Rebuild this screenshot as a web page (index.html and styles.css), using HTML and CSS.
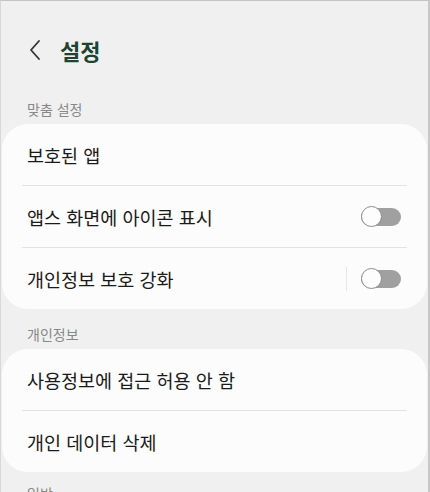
FILE: index.html
```html
<!DOCTYPE html>
<html lang="ko">
<head>
<meta charset="utf-8">
<link rel="stylesheet" href="styles.css">
</head>
<body>
<div class="screen">
  <header class="appbar">
    <svg class="back" width="14" height="22" viewBox="0 0 14 22"><path d="M11 2 L3 11 L11 20" fill="none" stroke="#333" stroke-width="1.8" stroke-linecap="round" stroke-linejoin="round"/></svg>
    <h1 class="title">설정</h1>
  </header>
  <div class="section-label">맞춤 설정</div>
  <div class="card">
    <div class="row"><span class="label">보호된 앱</span></div>
    <div class="divider"></div>
    <div class="row"><span class="label">앱스 화면에 아이콘 표시</span><span class="switch"><span class="knob"></span></span></div>
    <div class="divider"></div>
    <div class="row"><span class="label">개인정보 보호 강화</span><span class="vsep"></span><span class="switch"><span class="knob"></span></span></div>
  </div>
  <div class="section-label">개인정보</div>
  <div class="card">
    <div class="row"><span class="label">사용정보에 접근 허용 안 함</span></div>
    <div class="divider"></div>
    <div class="row"><span class="label">개인 데이터 삭제</span></div>
  </div>
  <div class="section-label last">일반</div>
</div>
</body>
</html>
```
FILE: styles.css
```css
html, body {
  margin: 0;
  padding: 0;
  background: #f0f0f0;
}
body {
  font-family: "Noto Sans CJK KR", "Noto Sans", sans-serif;
  overflow: hidden;
  height: 492px;
}
.screen {
  height: 492px;
  box-sizing: border-box;
  border-top: 1px solid #c4c4c4;
  border-left: 1px solid #d8d8d8;
  border-right: 2px solid #c8c8c8;
  padding: 0 1px;
  overflow: hidden;
}
.appbar {
  display: flex;
  align-items: center;
  height: 48px;
  margin-top: 25px;
  padding-left: 26px;
  padding-bottom: 10px;
}
.back {
  display: block;
}
.title {
  margin: 0 0 0 18px;
  font-size: 22px;
  font-weight: 700;
  color: #1d4430;
  line-height: 1;
}
.section-label {
  font-size: 14px;
  color: #888888;
  padding: 17px 0 6px 25px;
  line-height: 17px;
}
.section-label.last {
  padding-top: 13px;
}
.card {
  background: #fcfcfc;
  border-radius: 26px;
  padding: 0 20px;
}
.row {
  display: flex;
  align-items: center;
  height: 61px;
  padding: 0 5px;
}
.label {
  flex: 1;
  font-size: 18.5px;
  color: #1a1a1a;
}
.divider {
  height: 1px;
  background: #e2e2e2;
}
.vsep {
  width: 1px;
  height: 24px;
  background: #e6e6e6;
  margin-right: 12px;
}
.switch {
  position: relative;
  width: 40px;
  height: 18px;
  background: #a0a0a0;
  border-radius: 9px;
  margin-right: 1px;
  margin-left: 2px;
}
.knob {
  position: absolute;
  left: 0;
  top: -2px;
  width: 19px;
  height: 19px;
  border: 1.5px solid #8c8c8c;
  border-radius: 50%;
  background: #fdfdfd;
}
```
